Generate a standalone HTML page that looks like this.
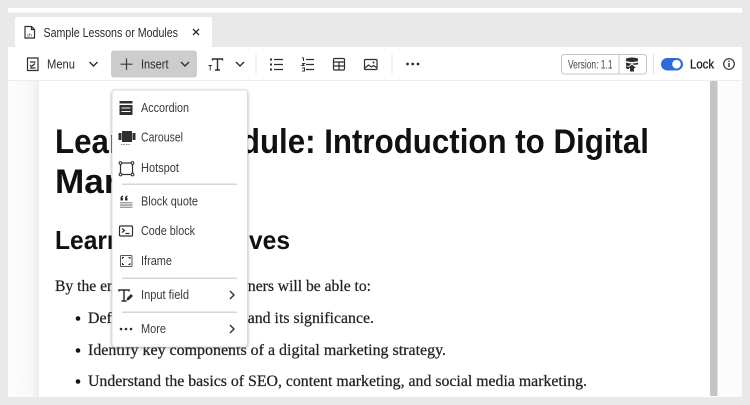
<!DOCTYPE html>
<html><head><meta charset="utf-8"><style>
html,body{margin:0;padding:0;width:750px;height:405px;overflow:hidden;background:#e9e9e9}
svg{display:block}
text{font-family:"Liberation Sans",sans-serif;fill:#2c2c2c;white-space:pre}
.ui{font-size:12.5px}
.m{font-size:12.5px;fill:#3a3a3a}
.b{font-family:"Liberation Serif",serif;font-size:16px;fill:#222;stroke:#222;stroke-width:.25px}
.h{font-weight:700;fill:#111}
.i{fill:none;stroke:#2f2f2f;stroke-width:1.2}
.f{fill:#2f2f2f}
</style></head><body>
<svg width="750" height="405" viewBox="0 0 750 405" xmlns="http://www.w3.org/2000/svg">
<defs>
<filter id="s" x="-10%" y="-10%" width="120%" height="120%"><feDropShadow dx="0" dy="1" stdDeviation="1.5" flood-color="#000" flood-opacity=".3"/></filter>
<linearGradient id="lg"><stop offset="0" stop-color="#fdfdfd"/><stop offset=".7" stop-color="#f9f9f9"/><stop offset="1" stop-color="#eee"/></linearGradient>
</defs>
<rect width="750" height="405" fill="#e9e9e9"/>
<rect x="8" y="8" width="734" height="4.5" fill="#fff"/>
<rect x="15" y="17" width="197" height="30" rx="2" fill="#fff"/>
<rect x="8" y="47" width="734" height="33" fill="#fff"/>
<rect x="8" y="80" width="734" height="1" fill="#ededed"/>
<rect x="8" y="81" width="734" height="316" fill="#fff"/>
<rect x="8" y="81" width="31" height="316" fill="url(#lg)"/>
<rect x="717" y="81" width="25" height="316" fill="#fcfcfc"/>
<rect x="710" y="81" width="7.5" height="315" rx="1" fill="#c4c4c4"/>

<!-- tab -->
<path class="i" d="M25 26.5h6.5l3 3v8.5h-9.5z M31.5 26.5v3h3"/>
<text x="27" y="36.5" style="font-size:4.5px">ch</text>
<text x="43.5" y="37" style="font-size:13px" textLength="134.5" lengthAdjust="spacingAndGlyphs">Sample Lessons or Modules</text>
<path d="M193 29l6 6M199 29l-6 6" fill="none" stroke="#2c2c2c" stroke-width="1.3"/>

<!-- toolbar -->
<rect x="111" y="50.5" width="86" height="27" rx="3" fill="#cdcdcd"/>
<path class="i" d="M27.5 58h10.5v12.5h-10.5z M30 62h5.5 M30 65l1.5 1.5 3.5-3 M30 68h5.5"/>
<text class="ui" x="47" y="68.500" textLength="28" lengthAdjust="spacingAndGlyphs">Menu</text>
<path class="i" style="stroke-width:1.4" d="M89.500 62l4 4 4-4"/>
<path d="M126.500 58.500v11.500M120.500 64.200h12" fill="none" stroke="#3a3a3a" stroke-width="1.2"/>
<text class="ui" x="141" y="68.500" textLength="27.500" lengthAdjust="spacingAndGlyphs">Insert</text>
<path class="i" style="stroke-width:1.4" d="M181 62l4 4 4-4"/>
<path class="i" style="stroke-width:1.4" d="M212.500 60.500v-1.500h10v1.500M217.500 59v11M215 70h5"/>
<path class="i" style="stroke-width:.9" d="M208.500 65.500h3.500M210.200 65.500v5"/>
<path class="i" style="stroke-width:1.4" d="M236 62l4 4 4-4"/>
<rect x="255.500" y="54" width="1" height="20" fill="#e3e3e3"/>
<path class="i" d="M274 59.500h9M274 64.500h9M274 69.500h9"/>
<path d="M270 58.500h2v2h-2zM270 63.500h2v2h-2zM270 68.500h2v2h-2z" class="f"/>
<path class="i" d="M306 59.500h8M306 64.500h8M306 69.500h8"/>
<path class="i" style="stroke-width:1" d="M302 58h1.500v3M302 63.500h2.500l-2.500 2h2.500M302 68h2.500v3h-2.500"/>
<rect class="i" x="333.500" y="58.500" width="11" height="11.500" rx="1.200"/>
<path class="i" d="M333.500 62h11M333.500 66h11M339 62v8"/>
<rect class="i" x="364.500" y="59.500" width="12.500" height="10" rx="1"/>
<path class="i" d="M365 68l3.500-3 3 2 2-1.500 3 2"/>
<circle class="f" cx="373.500" cy="62.500" r="1"/>
<rect x="391.500" y="54" width="1" height="20" fill="#e3e3e3"/>
<circle class="f" cx="407.500" cy="64" r="1.400"/><circle class="f" cx="412.700" cy="64" r="1.400"/><circle class="f" cx="418" cy="64" r="1.400"/>

<rect x="561.500" y="54.500" width="85" height="19.500" rx="3" fill="#fff" stroke="#c6c6c6"/>
<rect x="618.500" y="55" width="1" height="19" fill="#c6c6c6"/>
<text x="568" y="68.500" style="font-size:11.500px;fill:#444" textLength="44.500" lengthAdjust="spacingAndGlyphs">Version: 1.1</text>
<path class="f" d="M626 58.500q6-2 12 0v2.500q-6 2-12 0zM626 62.500q6 2 12 0v2q-3 0-4 .5l-2-2-3 3q-2 0-3-.5zM626 66q1 .5 3 .8v2.500q-2-.3-3-1zM632 64.500l4 3.500h-2v3.500h-4v-3.500h-2z"/>
<rect x="653" y="54" width="1" height="20" fill="#e3e3e3"/>
<rect x="661" y="58" width="22" height="12.500" rx="6.250" fill="#2c6cd8"/>
<circle cx="676.500" cy="64.200" r="4.300" fill="#fff"/>
<text x="690" y="68.500" style="font-size:13px;fill:#222;stroke:#222;stroke-width:.3px" textLength="24" lengthAdjust="spacingAndGlyphs">Lock</text>
<circle class="i" cx="729" cy="64" r="5.300"/>
<path class="f" d="M728.300 63h1.400v4h-1.400zM728.300 60.600h1.400v1.400h-1.400z"/>

<!-- page -->
<text class="h" x="55" y="153" style="font-size:34px" textLength="594" lengthAdjust="spacingAndGlyphs">Learning Module: Introduction to Digital</text>
<text class="h" x="55" y="193" style="font-size:34px" textLength="166" lengthAdjust="spacingAndGlyphs">Marketing</text>
<text class="h" x="55" y="249" style="font-size:26px" textLength="235" lengthAdjust="spacingAndGlyphs">Learning Objectives</text>
<text class="b" x="55" y="291" textLength="316" lengthAdjust="spacingAndGlyphs">By the end of this module, learners will be able to:</text>
<circle class="f" cx="78" cy="318.500" r="2.300" style="fill:#111"/>
<text class="b" x="88" y="323" textLength="286" lengthAdjust="spacingAndGlyphs">Define digital marketing and its significance.</text>
<circle class="f" cx="78" cy="350.500" r="2.300" style="fill:#111"/>
<text class="b" x="88" y="355" textLength="358" lengthAdjust="spacingAndGlyphs">Identify key components of a digital marketing strategy.</text>
<circle class="f" cx="78" cy="381.500" r="2.300" style="fill:#111"/>
<text class="b" x="88" y="386" textLength="499" lengthAdjust="spacingAndGlyphs">Understand the basics of SEO, content marketing, and social media marketing.</text>

<!-- dropdown -->
<rect x="112" y="90" width="135.500" height="257" rx="3" fill="#fff" stroke="#d4d4d4" stroke-width=".8" filter="url(#s)"/>

<path class="f" d="M119.500 101h13v2.500h-13zM119.500 105h13v10h-13z"/>
<path d="M121.500 108h9M121.500 111.500h9" stroke="#fff" stroke-width="1"/>
<text class="m" x="141" y="112" textLength="48" lengthAdjust="spacingAndGlyphs">Accordion</text>

<path class="f" d="M122 131h10v11h-10zM118.500 133h3v7h-3zM132.500 133h3v7h-3z"/>
<path d="M121 144.500h10" stroke="#666" stroke-width=".7" stroke-dasharray="1.500 1"/>
<text class="m" x="141" y="141.500" textLength="42" lengthAdjust="spacingAndGlyphs">Carousel</text>

<rect class="i" x="120.500" y="163" width="12" height="11.500"/>
<g fill="#fff" stroke="#2f2f2f"><circle cx="120.500" cy="163" r="1.400"/><circle cx="132.500" cy="163" r="1.400"/><circle cx="120.500" cy="174.500" r="1.400"/><circle cx="132.500" cy="174.500" r="1.400"/></g>
<text class="m" x="141" y="172" textLength="38" lengthAdjust="spacingAndGlyphs">Hotspot</text>

<rect x="122" y="183.500" width="115" height="1.500" fill="#d6d6d6"/>

<path class="f" d="M120.500 198q0-2 2.500-2.500v1.500q-1 .2-1 1h1v2.500h-2.500zM125 198q0-2 2.500-2.500v1.500q-1 .2-1 1h1v2.500h-2.500z"/>
<path d="M120 202.800h12.500M120 205h12.500M120 207.200h12.500" stroke="#666" stroke-width=".9"/>
<text class="m" x="141" y="205.500" textLength="57" lengthAdjust="spacingAndGlyphs">Block quote</text>

<rect class="i" x="119.500" y="226" width="13" height="10" rx="1"/>
<path class="i" d="M122 228.500l2.500 2-2.500 2M125.500 233.500h4"/>
<text class="m" x="141" y="235" textLength="54" lengthAdjust="spacingAndGlyphs">Code block</text>

<rect x="120.500" y="255.500" width="11.500" height="11" rx="1" fill="none" stroke="#555" stroke-width="1"/>
<path d="M122.500 259v-1.500h1.500M130 259v-1.500h-1.500M122.500 263v1.500h1.500M130 263v1.500h-1.500" fill="none" stroke="#2f2f2f" stroke-width="1"/>
<text class="m" x="141" y="265" textLength="31" lengthAdjust="spacingAndGlyphs">Iframe</text>

<rect x="122" y="277.500" width="115" height="1.500" fill="#d6d6d6"/>

<path class="i" style="stroke-width:1.500" d="M119 291.500v-1.500h10v1.500M124 290v11M121.500 301h5"/>
<path class="f" d="M127 298l4-4 2 2-4 4-2.500.5z"/>
<text class="m" x="141" y="299" textLength="48" lengthAdjust="spacingAndGlyphs">Input field</text>
<path class="i" style="stroke-width:1.400" d="M230 291l4 4-4 4"/>

<rect x="122" y="311.500" width="115" height="1.500" fill="#d6d6d6"/>

<circle class="f" cx="121" cy="329" r="1.300"/><circle class="f" cx="126" cy="329" r="1.300"/><circle class="f" cx="131" cy="329" r="1.300"/>
<text class="m" x="141" y="333" textLength="25" lengthAdjust="spacingAndGlyphs">More</text>
<path class="i" style="stroke-width:1.400" d="M230 325l4 4-4 4"/>
</svg>
</body></html>
